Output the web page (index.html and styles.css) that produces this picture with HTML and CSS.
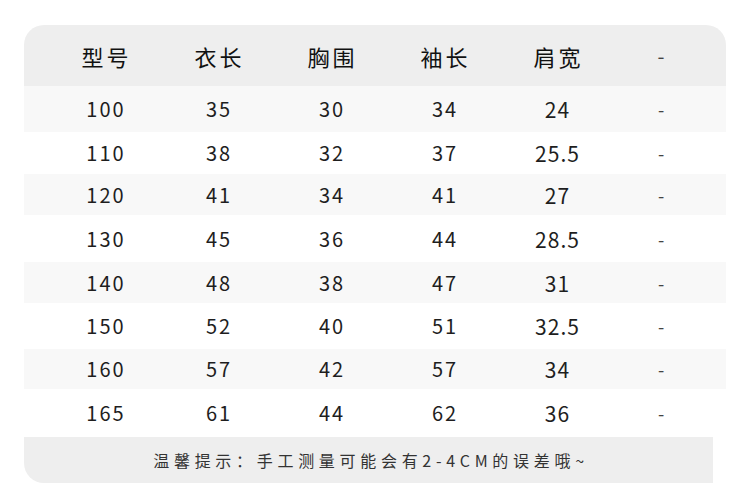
FILE: index.html
```html
<!DOCTYPE html>
<html lang="zh-CN">
<head>
<meta charset="utf-8">
<title>尺码表</title>
<link rel="stylesheet" href="styles.css">
</head>
<body>
<div class="sheet">
  <div class="row head">
    <div class="cell">型号</div><div class="cell">衣长</div><div class="cell">胸围</div><div class="cell">袖长</div><div class="cell">肩宽</div><div class="cell dash">-</div>
  </div>
  <div class="row shade"><div class="cell">100</div><div class="cell">35</div><div class="cell">30</div><div class="cell">34</div><div class="cell wide">24</div><div class="cell dash">-</div></div>
  <div class="row"><div class="cell">110</div><div class="cell">38</div><div class="cell">32</div><div class="cell">37</div><div class="cell wide">25.5</div><div class="cell dash">-</div></div>
  <div class="row shade"><div class="cell">120</div><div class="cell">41</div><div class="cell">34</div><div class="cell">41</div><div class="cell wide">27</div><div class="cell dash">-</div></div>
  <div class="row"><div class="cell">130</div><div class="cell">45</div><div class="cell">36</div><div class="cell">44</div><div class="cell wide">28.5</div><div class="cell dash">-</div></div>
  <div class="row shade"><div class="cell">140</div><div class="cell">48</div><div class="cell">38</div><div class="cell">47</div><div class="cell wide">31</div><div class="cell dash">-</div></div>
  <div class="row"><div class="cell">150</div><div class="cell">52</div><div class="cell">40</div><div class="cell">51</div><div class="cell wide">32.5</div><div class="cell dash">-</div></div>
  <div class="row shade"><div class="cell">160</div><div class="cell">57</div><div class="cell">42</div><div class="cell">57</div><div class="cell wide">34</div><div class="cell dash">-</div></div>
  <div class="row"><div class="cell">165</div><div class="cell">61</div><div class="cell">44</div><div class="cell">62</div><div class="cell wide">36</div><div class="cell dash">-</div></div>
  <div class="note">温馨提示：手工测量可能会有2-4CM的误差哦~</div>
</div>
</body>
</html>
```

FILE: styles.css
```css
html, body {
  margin: 0;
  padding: 0;
  background: #ffffff;
}
body {
  font-family: "Noto Sans CJK SC", "Noto Sans", sans-serif;
  color: #1e1e1e;
}
.sheet {
  width: 702px;
  margin: 25px 0 0 24px;
  display: flex;
  flex-direction: column;
}
.row {
  display: grid;
  grid-template-columns: repeat(5, 113px) 95px;
  padding-left: 24.5px;
  align-items: center;
  height: 44px;
  font-size: 20px;
  line-height: 1;
}
.row.shade {
  background: #f8f8f8;
}
.cell {
  text-align: center;
  letter-spacing: 2px;
  padding-left: 2px;
}
.cell.wide {
  font-size: 21px;
  letter-spacing: 1px;
  padding-left: 1px;
  padding-top: 1px;
}
.cell.dash {
  font-size: 18px;
  color: #444;
  letter-spacing: 0;
  padding-left: 0;
}
.row.head {
  height: 61px;
  background: #eeeeee;
  border-radius: 20px 20px 0 0;
  font-size: 22px;
  color: #111;
}
.row.head .cell {
  letter-spacing: 3px;
  padding-left: 3px;
  padding-top: 1px;
}
.row.head .cell.dash {
  font-size: 20px;
  letter-spacing: 0;
  padding-left: 0;
}
.row:nth-child(2) { height: 46px; }
.row:nth-child(3) { height: 42px; }
.row:nth-child(4) { height: 41px; }
.row:nth-child(5) { height: 47px; }
.row:nth-child(6) { height: 41px; }
.row:nth-child(7) { height: 46px; }
.row:nth-child(8) { height: 40px; }
.row:nth-child(9) { height: 48px; }
.note {
  width: 689px;
  height: 46px;
  background: #eeeeee;
  border-radius: 0 0 0 20px;
  display: flex;
  align-items: center;
  justify-content: center;
  font-size: 16px;
  letter-spacing: 4.7px;
  color: #333;
  padding-left: 5px;
  box-sizing: border-box;
}
```
